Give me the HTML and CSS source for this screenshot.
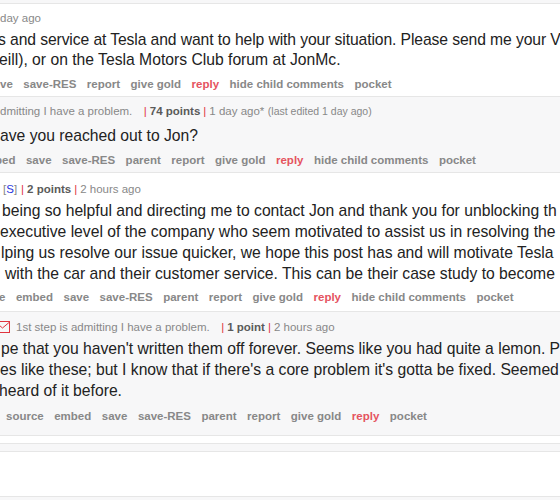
FILE: index.html
```html
<!DOCTYPE html>
<html>
<head>
<meta charset="utf-8">
<link rel="stylesheet" href="styles.css">
</head>
<body>
<div class="page">
  <div class="comment odd c1">
    <div class="meta">day ago</div>
    <div class="body">
      <div class="line sh-2 tight">s and service at Tesla and want to help with your situation. Please send me your V</div>
      <div class="line sh-1">eill), or on the Tesla Motors Club forum at JonMc.</div>
    </div>
    <ul class="actions">
      <li>ve</li><li>save-RES</li><li>report</li><li>give gold</li><li class="reply">reply</li><li>hide child comments</li><li>pocket</li>
    </ul>
    <div class="child">
      <div class="comment even c2">
        <div class="meta"><span class="flair">dmitting I have a problem.</span> <span class="sep">|</span> <b class="score">74 points</b> <span class="sep">|</span> 1 day ago* <span class="edited">(last edited 1 day ago)</span></div>
        <div class="body">
          <div class="line">ave you reached out to Jon?</div>
        </div>
        <ul class="actions sh-5">
          <li>bed</li><li>save</li><li>save-RES</li><li>parent</li><li>report</li><li>give gold</li><li class="reply">reply</li><li>hide child comments</li><li>pocket</li>
        </ul>
        <div class="child">
          <div class="comment odd c3">
            <div class="meta"><span class="tag">[<span class="tag-s">S</span>]</span> <span class="sep">|</span> <b class="score">2 points</b> <span class="sep">|</span> 2 hours ago</div>
            <div class="body">
              <div class="line in-2">being so helpful and directing me to contact Jon and thank you for unblocking th</div>
              <div class="line">executive level of the company who seem motivated to assist us in resolving the</div>
              <div class="line in-1">lping us resolve our issue quicker, we hope this post has and will motivate Tesla</div>
              <div class="line in-5">with the car and their customer service. This can be their case study to become</div>
            </div>
            <ul class="actions sh-1">
              <li>e</li><li>embed</li><li>save</li><li>save-RES</li><li>parent</li><li>report</li><li>give gold</li><li class="reply">reply</li><li>hide child comments</li><li>pocket</li>
            </ul>
            <div class="child">
              <div class="comment even c4">
                <div class="meta"><svg class="mail" width="15" height="12" viewBox="0 0 15 12"><rect x="0.5" y="0.5" width="14" height="11" fill="none" stroke="#e0343f" stroke-width="1"/><path d="M1 1.5 L7.5 7 L14 1.5" fill="none" stroke="#e0343f" stroke-width="1"/></svg><span class="flair">1st step is admitting I have a problem.</span> <span class="sep">|</span> <b class="score">1 point</b> <span class="sep">|</span> 2 hours ago</div>
                <div class="body">
                  <div class="line in-1">pe that you haven't written them off forever. Seems like you had quite a lemon. P</div>
                  <div class="line">es like these; but I know that if there's a core problem it's gotta be fixed. Seemed</div>
                  <div class="line sh-1">heard of it before.</div>
                </div>
                <ul class="actions in-6">
                  <li>source</li><li>embed</li><li>save</li><li>save-RES</li><li>parent</li><li>report</li><li>give gold</li><li class="reply">reply</li><li>pocket</li>
                </ul>
              </div>
            </div>
          </div>
        </div>
      </div>
    </div>
    <div class="tail"></div>
  </div>
</div>
</body>
</html>
```
FILE: styles.css
```css
html, body {
  margin: 0;
  padding: 0;
}
body {
  width: 560px;
  height: 500px;
  overflow: hidden;
  background: #f7f7f8;
  font-family: "Liberation Sans", Arial, sans-serif;
}
.page {
  padding-top: 3px;
}
.comment {
  border-top: 1px solid #e6e6e6;
  border-bottom: 1px solid #e6e6e6;
  padding: 5.5px 0 7px;
}
.odd { background: #ffffff; }
.even { background: #f7f7f8; }
.c2 { padding-top: 6.5px; }
.c3 { padding-top: 7.5px; }
.c4 { padding-top: 7px; padding-bottom: 9.5px; }

.meta {
  font-size: 11.5px;
  line-height: 16px;
  height: 16px;
  color: #888888;
  white-space: nowrap;
  display: flex;
  align-items: center;
}
.meta .flair { margin-right: 8.5px; white-space: pre; }
.meta .sep { color: #e0343f; margin: 0 3px; }
.meta .score { color: #5a5a5a; font-weight: bold; }
.meta .edited { font-size: 10.5px; margin-left: 3.5px; }
.meta .tag { margin-left: 3px; margin-right: 1px; }
.meta .tag-s { color: #2a35e0; }
.meta .mail { margin-left: -5px; margin-right: 6px; flex: none; }

.body {
  margin-top: 4.5px;
  font-size: 15.7px;
  line-height: 21px;
  color: #222222;
}
.c1 > .body { line-height: 20px; }
.c2 > .body { margin-top: 6px; }
.c3 > .body { margin-top: 3.5px; }
.c4 > .body { margin-top: 3.5px; }
.line {
  white-space: nowrap;
}
.tight { letter-spacing: -0.1px; }

.actions {
  list-style: none;
  margin: 5.5px 0 1.5px;
  padding: 0;
  display: flex;
  gap: 10.5px;
  font-size: 11.5px;
  line-height: 16px;
  font-weight: bold;
  color: #888888;
  white-space: nowrap;
}
.c3 > .actions { margin-top: 4.5px; }
.c4 > .actions { margin-top: 6.5px; }
.actions .reply { color: #e5535f; }

.child { margin-top: 4px; }
.c2 > .child { margin-top: 4.5px; }
.c3 > .child { margin-top: 6px; }
.tail { height: 37px; }

.sh-1 { margin-left: -1px; }
.sh-2 { margin-left: -2px; }
.sh-5 { margin-left: -5px; }
.in-1 { padding-left: 1px; }
.in-2 { padding-left: 2px; }
.in-5 { padding-left: 5px; }
.in-6 { padding-left: 6px; }
```
